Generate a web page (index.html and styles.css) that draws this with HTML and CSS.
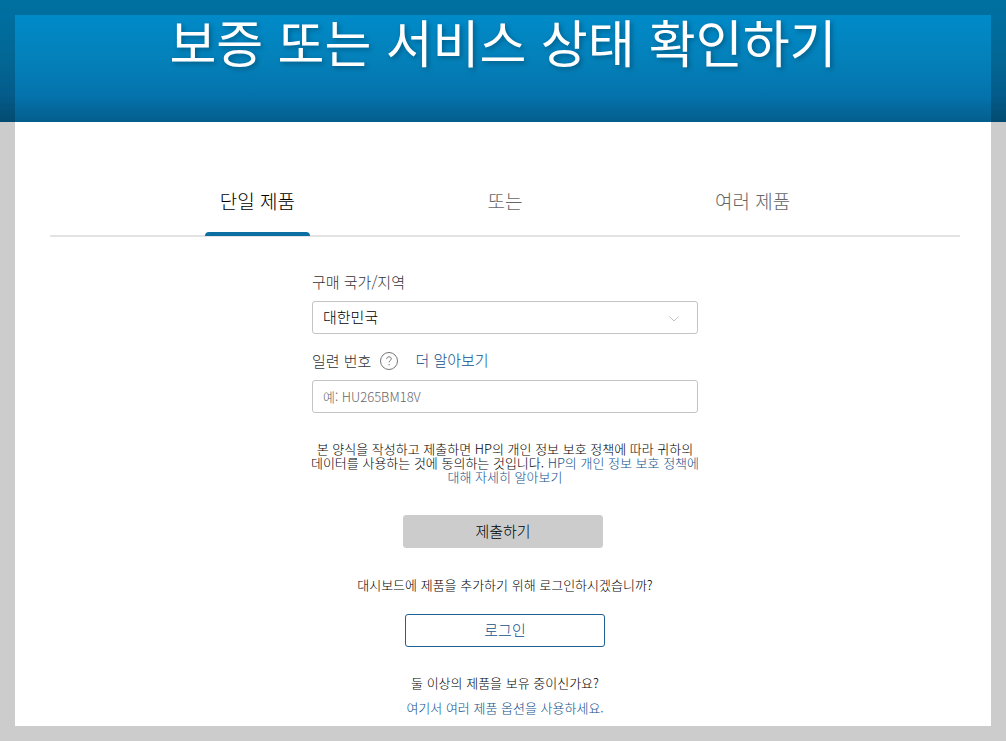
FILE: index.html
```html
<!DOCTYPE html>
<html lang="ko">
<head>
<meta charset="utf-8">
<meta name="viewport" content="width=device-width, initial-scale=1">
<title>보증 또는 서비스 상태 확인하기</title>
<link rel="stylesheet" href="styles.css">
</head>
<body>
<header class="banner">
  <h1 class="banner-title">보증 또는 서비스 상태 확인하기</h1>
</header>
<main class="content">
  <nav class="tabs">
    <div class="tab-list">
      <button type="button" class="tab tab-active">단일 제품</button>
      <span class="tab">또는</span>
      <button type="button" class="tab">여러 제품</button>
    </div>
  </nav>
  <form class="form">
    <label class="label" for="country">구매 국가/지역</label>
    <div class="select-wrap">
      <select class="field" id="country"><option>대한민국</option></select>
      <svg class="chevron" viewBox="0 0 12 8" aria-hidden="true"><path d="M1.500 1.500 6 6l4.500-4.500"/></svg>
    </div>
    <div class="label-row">
      <label class="label" for="serial">일련 번호</label>
      <svg class="help" viewBox="0 0 20 20" aria-hidden="true"><circle cx="10" cy="10" r="8.500"/><path d="M7.700 8.100c0-1.400 1-2.300 2.300-2.300s2.300.8 2.300 2c0 1.700-2.200 1.700-2.200 3.500"/><path d="M10.100 13v1.300"/></svg>
      <a class="link more" href="#">더 알아보기</a>
    </div>
    <input class="field serial" id="serial" type="text" placeholder="예: HU265BM18V">
    <p class="note legal">본 양식을 작성하고 제출하면 HP의 개인 정보 보호 정책에 따라 귀하의 데이터를 사용하는 것에 동의하는 것입니다. <a class="link" href="#">HP의 개인 정보 보호 정책에 대해 자세히 알아보기</a></p>
    <button type="submit" class="button submit">제출하기</button>
    <p class="note">대시보드에 제품을 추가하기 위해 로그인하시겠습니까?</p>
    <button type="button" class="button login">로그인</button>
    <p class="note">둘 이상의 제품을 보유 중이신가요?</p>
    <a class="link note-link" href="#">여기서 여러 제품 옵션을 사용하세요.</a>
  </form>
</main>
</body>
</html>
```
FILE: styles.css
```css
* {
  box-sizing: border-box;
}

body {
  margin: 0;
  min-height: 100vh;
  background: #fff;
  color: #000;
  font-family: "Noto Sans CJK KR", sans-serif;
  font-weight: 300;
  font-size: 15px;
}

/* Translucent frame around the window */
body::after {
  content: "";
  position: fixed;
  inset: 0;
  border: 15px solid rgba(0, 0, 0, 0.2);
  pointer-events: none;
}

.banner {
  padding: 5px 16px 45px;
  background: linear-gradient(#008dc9 0%, #008ac8 14%, #0480b9 50%, #0473ad 78%, #045e8c 100%);
}

.banner-title {
  margin: 0;
  color: #fff;
  font-size: 51px;
  font-weight: 400;
  line-height: 72px;
  text-align: center;
  text-shadow: 2px 2px 5px rgba(0, 0, 0, 0.3);
}

.content {
  padding: 44px 46px 15px 50px;
}

.tabs {
  border-bottom: 2px solid #e3e3e3;
}

.tab-list {
  display: grid;
  grid-template-columns: repeat(3, 1fr);
  justify-items: center;
  max-width: 743px;
  margin: 0 auto -2px;
}

.tab {
  padding: 20px 15px 18px;
  border: 0;
  border-bottom: 4px solid transparent;
  background: none;
  color: #666;
  font: inherit;
  font-size: 19px;
  line-height: 29px;
}

.tab-active {
  position: relative;
  color: #000;
}

.tab-active::after {
  content: "";
  position: absolute;
  left: 0;
  right: 0;
  bottom: -3px;
  height: 4px;
  border-radius: 4px 4px 0 0;
  background: #0b6fa4;
}

.form {
  display: flex;
  flex-direction: column;
  align-items: center;
  max-width: 386px;
  margin: 34px auto 0;
}

.label {
  align-self: flex-start;
  color: #333;
  line-height: 22px;
}

.select-wrap {
  position: relative;
  width: 100%;
  margin-top: 8px;
}

.field {
  display: block;
  width: 100%;
  height: 33px;
  padding: 0 10px 3px;
  border: 1px solid #c4c4c4;
  border-radius: 3px;
  appearance: none;
  background: #fff;
  color: #000;
  font: inherit;
}

.chevron {
  position: absolute;
  right: 18px;
  top: 14px;
  width: 12px;
  height: 8px;
  fill: none;
  stroke: #c4c4c4;
}

.label-row {
  display: flex;
  align-items: center;
  align-self: stretch;
  margin-top: 16px;
}

.help {
  width: 20px;
  height: 20px;
  margin: 0 16px 0 8px;
  fill: none;
  stroke: #767676;
}

.link {
  color: #0f4f8a;
  text-decoration: none;
}

.more {
  padding-bottom: 3px;
  line-height: 19px;
}

.serial {
  margin-top: 8px;
  padding-bottom: 0;
  font-size: 13px;
}

.serial::placeholder {
  color: #666;
}

.note {
  margin: 0;
  font-size: 13px;
  line-height: 14px;
  text-align: center;
  word-break: keep-all;
}

.legal {
  align-self: stretch;
  margin: 29px -6px 0;
}

.button {
  width: 200px;
  height: 33px;
  padding: 0 0 2px;
  border: 1px solid #ccc;
  border-radius: 3px;
  background: #ccc;
  color: #000;
  font: inherit;
}

.submit {
  margin: 31px 4px 30px 0;
}

.login {
  margin: 22px 0 29px;
  border-color: #1f5f91;
  background: #fff;
  color: #0f4f8a;
}

.note-link {
  margin-top: 11px;
  font-size: 13px;
  line-height: 14px;
}
```
